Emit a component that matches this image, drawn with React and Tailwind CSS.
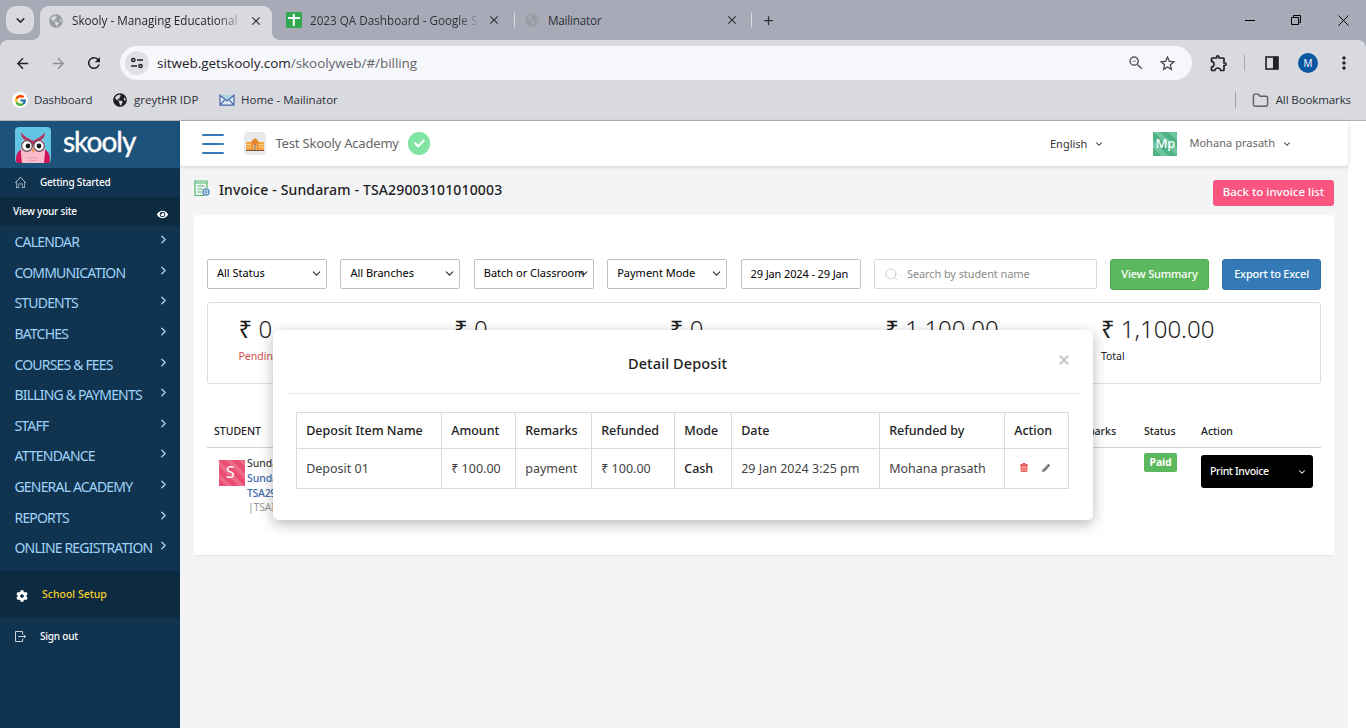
import { FaCheck, FaCog, FaEye, FaGlobeAmericas, FaPencilAlt } from "react-icons/fa";
import { FcGoogle } from "react-icons/fc";
import { FiChevronDown, FiChevronRight, FiSearch, FiX } from "react-icons/fi";
import { LuFolder } from "react-icons/lu";
import {
  MdAdd,
  MdArrowBack,
  MdArrowForward,
  MdClose,
  MdMoreVert,
  MdOutlineExtension,
  MdRefresh,
  MdStarBorder,
  MdZoomOut,
} from "react-icons/md";
import { SlHome } from "react-icons/sl";

const menu = [
  "CALENDAR",
  "COMMUNICATION",
  "STUDENTS",
  "BATCHES",
  "COURSES & FEES",
  "BILLING & PAYMENTS",
  "STAFF",
  "ATTENDANCE",
  "GENERAL ACADEMY",
  "REPORTS",
  "ONLINE REGISTRATION",
];

const stats = [
  { amount: "0", label: "Pending", color: "text-[#d0504c]" },
  { amount: "0" },
  { amount: "0" },
  { amount: "1,100.00" },
  { amount: "1,100.00", label: "Total", color: "text-[#222]" },
];

const depositColumns = [
  { title: "Deposit Item Name", value: "Deposit 01", width: "w-[145px]" },
  { title: "Amount", value: "₹ 100.00", width: "w-[74px]" },
  { title: "Remarks", value: "payment", width: "w-[76px]" },
  { title: "Refunded", value: "₹ 100.00", width: "w-[83px]" },
  { title: "Mode", value: "Cash", width: "w-[57px]", strong: true },
  { title: "Date", value: "29 Jan 2024 3:25 pm", width: "w-[148px]" },
  { title: "Refunded by", value: "Mohana prasath", width: "w-[125px]" },
];

const TabStrip = () => (
  <div className="flex h-10 bg-[#a8abb7] text-[11.7px] text-[#2d3038]">
    <div className="flex w-10 items-center pl-1.5">
      <div className="flex h-7 w-7 items-center justify-center rounded-[10px] bg-[#d9dadf]">
        <FiChevronDown size={13} strokeWidth={3} />
      </div>
    </div>
    <div className="relative mt-1.5 flex h-[34px] w-[232px] items-center rounded-t-[9px] bg-[#d9dadf] pb-[5px] pl-2">
      <span className="absolute bottom-0 -left-2 h-2 w-2 bg-[radial-gradient(circle_at_0_0,#a8abb7_7.5px,#d9dadf_8.5px)]" />
      <span className="absolute -right-2 bottom-0 h-2 w-2 bg-[radial-gradient(circle_at_100%_0,#a8abb7_7.5px,#d9dadf_8.5px)]" />
      <FaGlobeAmericas size={14} className="mr-[9px] ml-[1px] text-[#999ca3]" />
      <span className="w-[168px] bg-linear-to-r from-[#202228] from-85% to-[#b9bbc1] bg-clip-text whitespace-nowrap text-transparent">
        Skooly - Managing Educational
      </span>
      <MdClose size={14} className="ml-[9px]" />
    </div>
    <div className="flex w-[242px] items-center pl-[14px]">
      <svg width="16" height="16" viewBox="0 0 16 16" className="mr-2">
        <rect width="16" height="16" rx="1.5" fill="#2fa84f" />
        <path d="M7.8 2v12M2 6h12" stroke="#fff" strokeWidth="2" />
      </svg>
      <span className="w-[168px] bg-linear-to-r from-[#2d3038] from-88% to-[#a0a3af] bg-clip-text pt-[1px] whitespace-nowrap text-transparent">
        2023 QA Dashboard - Google S
      </span>
      <MdClose size={14} className="ml-[9px]" />
    </div>
    <div className="flex w-[237px] items-center">
      <div className="h-4 w-[1px] bg-[#d9dadf]" />
      <FaGlobeAmericas size={14} className="mr-[9px] ml-[10px] text-[#999ca5]" />
      <span className="w-[168px] pt-[1px] tracking-[-0.2px]">Mailinator</span>
      <MdClose size={14} className="ml-[9px]" />
    </div>
    <div className="flex items-center">
      <div className="mr-[9px] h-4 w-[1px] bg-[#d9dadf]" />
      <MdAdd size={15} />
    </div>
    <div className="ml-auto flex items-center text-black">
      <svg width="11" height="11" viewBox="0 0 11 11" className="mr-[35px]">
        <path d="M0 5.5h10" stroke="currentColor" />
      </svg>
      <svg width="11" height="11" viewBox="0 0 11 11" className="mr-[36px]" fill="none" stroke="currentColor">
        <path d="M.5 2.5h7v7h-7zM2.5 2.5v-2h7v7h-2" />
      </svg>
      <svg width="11" height="11" viewBox="0 0 11 11" className="mr-[17px]" stroke="currentColor">
        <path d="M.5.5l10 10M10.5 .5l-10 10" />
      </svg>
    </div>
  </div>
);

const Toolbar = () => (
  <div className="bg-[#a8abb7]">
    <div className="flex h-[46px] items-center rounded-t-[8px] bg-[#d9dadf] text-[#1f2126]">
      <MdArrowBack size={17} className="ml-[14px]" />
      <MdArrowForward size={17} className="ml-[19px] text-[#8d9098]" />
      <MdRefresh size={18} className="ml-[18px]" />
      <div className="ml-[17px] flex h-[34px] w-[1072px] items-center rounded-full bg-[#f6f7fa] pl-[5px]">
        <div className="flex h-6 w-6 items-center justify-center rounded-full bg-[#dfe0e5]">
          <svg width="14" height="12" viewBox="0 0 14 12" fill="none" stroke="currentColor" strokeWidth="1.5">
            <circle cx="3.3" cy="3" r="1.6" />
            <path d="M7 3h6M1 9h6" />
            <circle cx="10.5" cy="9" r="1.6" />
          </svg>
        </div>
        <span className="ml-2 text-[13.5px] tracking-[-0.05px]">
          sitweb.getskooly.com<span className="text-[#63666d]">/skoolyweb/#/billing</span>
        </span>
        <MdZoomOut size={18} className="mr-[13px] ml-auto text-[#5b5e64]" />
        <MdStarBorder size={19} className="mr-[15px] text-[#45484e]" />
      </div>
      <MdOutlineExtension size={20} className="ml-[17px]" />
      <div className="ml-[15px] h-4 w-[1px] bg-[#a5a8b0]" />
      <svg width="14" height="14" viewBox="0 0 14 14" className="ml-[20px]">
        <rect x="1" y="1" width="12" height="12" fill="none" stroke="currentColor" strokeWidth="1.6" />
        <path d="M8 1h5v12H8z" fill="currentColor" />
      </svg>
      <div className="ml-[19px] flex h-5 w-5 items-center justify-center rounded-full bg-[#0b57a0] text-[10px] text-white">
        M
      </div>
      <MdMoreVert size={20} className="ml-[16px]" />
    </div>
    <div className="flex h-[34px] items-center bg-[#d9dadf] pb-[6px] text-[11.5px] text-[#2d3038]">
      <div className="ml-3 flex h-4 w-4 items-center justify-center rounded-full bg-white">
        <FcGoogle size={13} />
      </div>
      <span className="ml-[6px] w-[73px] tracking-[-0.1px]">Dashboard</span>
      <FaGlobeAmericas size={14} className="ml-[6px] text-[#1c1d21]" />
      <span className="ml-[7px] w-[80px]">greytHR IDP</span>
      <svg width="16" height="12" viewBox="0 0 16 12" className="ml-[5px]">
        <path d="M1 1h14v10H1z" fill="#a9dbe0" />
        <path
          d="M1 1.2l7 5.800 7-5.800v10H1zM1 11.2l4.500-5M15 11.2l-4.500-5"
          fill="#dce9f4"
          stroke="#4a66a8"
          strokeWidth="1.2"
        />
      </svg>
      <span className="ml-[6px]">Home - Mailinator</span>
      <div className="mr-[16px] ml-auto h-4 w-[1px] bg-[#a0a3ab]" />
      <LuFolder size={17} className="text-[#5e6168]" />
      <span className="mr-[15px] ml-[7px] tracking-[-0.1px]">All Bookmarks</span>
    </div>
  </div>
);

const Owl = () => (
  <svg width="36" height="36" viewBox="0 0 36 36" className="rounded-[4px]">
    <rect width="36" height="36" fill="#62c5e3" />
    <path d="M7 22C2 24 0 30 1.500 36H10zM29 22c5 2 7 8 5.500 14H26z" fill="#cf1259" />
    <path d="M7 36c-1-8-2-17 1-23l4 1h12l4-1c3 6 2 15 1 23z" fill="#f9bccb" />
    <path d="M6.500 5c2 5 7 6 11.500 9 4.500-3 9.500-4 11.500-9 1 6-3 8-7 9.500L18 19l-4.500-4.500C9.500 13 5.500 11 6.500 5z" fill="#b8305c" />
    <circle cx="12" cy="19" r="5.3" fill="#fff" stroke="#6b4a55" strokeWidth="1.2" />
    <circle cx="24" cy="19" r="5.3" fill="#fff" stroke="#6b4a55" strokeWidth="1.2" />
    <circle cx="13" cy="19" r="2.4" fill="#1d1d1d" />
    <circle cx="24" cy="19" r="2.4" fill="#1d1d1d" />
    <path d="M16.3 22l1.700 4.500 1.700-4.500z" fill="#f39a3d" />
    <path d="M13 31h10M14 33.5h8" stroke="#f08fb0" strokeDasharray="2 1" />
  </svg>
);

const Sidebar = () => (
  <div className="w-[180px] shrink-0 bg-[#10344f] text-white">
    <div className="flex h-[47px] items-center bg-[#1d527b] pl-[15px]">
      <Owl />
      <span className="ml-[12px] pb-[8px] font-[Lato] text-[28px] leading-none tracking-[-1px] [-webkit-text-stroke:0.4px_white]">
        skooly
      </span>
    </div>
    <div className="flex h-[29px] items-center pl-[15px] text-[10px] font-medium tracking-[-0.2px]">
      <SlHome size={11} className="text-[#c4ced8]" />
      <span className="ml-[14px]">Getting Started</span>
    </div>
    <div className="flex h-[29px] items-center justify-between bg-[#0d2b40] pr-[12px] pl-[13px] text-[10px] font-medium tracking-[-0.2px]">
      <span>View your site</span>
      <FaEye size={11} className="mt-[5px]" />
    </div>
    <div className="h-[345px] text-[#a0d3f9]">
      {menu.map((item) => (
        <div key={item} className="flex h-[30.6px] items-center justify-between pr-[10px] pl-[14.5px]">
          <span className="pt-[2px] text-[14px] leading-none tracking-[-0.82px] whitespace-nowrap">{item}</span>
          <FiChevronRight size={13} strokeWidth={2.5} className="mb-[3px] shrink-0" />
        </div>
      ))}
    </div>
    <div className="flex h-[47px] items-center bg-[#0d2b40] pl-[16px] text-[10.5px] font-medium">
      <FaCog size={12} className="mt-[2px]" />
      <span className="ml-[14px] text-[#f5d02c]">School Setup</span>
    </div>
    <div className="flex h-[36px] items-center pl-[15px] text-[10px] font-medium tracking-[-0.2px]">
      <svg width="11" height="11" viewBox="0 0 11 11" fill="none" stroke="#c9d3dc">
        <path d="M7.5 3V.5h-7v10h7V8M3 5.5h7.5M8.5 3.5l2 2-2 2" />
      </svg>
      <span className="ml-[14px]">Sign out</span>
    </div>
  </div>
);

const Header = () => (
  <div className="relative flex h-[45px] w-[1168px] items-center rounded-b-[3px] bg-white shadow-[0_1px_4px_rgba(0,0,0,0.16)]">
    <div className="ml-[22px] flex flex-col gap-[7px]">
      <div className="h-[2px] w-[22px] rounded-full bg-[#337ab7]" />
      <div className="h-[2px] w-[22px] rounded-full bg-[#337ab7]" />
      <div className="h-[2px] w-[22px] rounded-full bg-[#337ab7]" />
    </div>
    <div className="ml-[20px] flex h-[23px] w-[22px] items-center justify-center rounded-[4px] bg-[#e8e9ec]">
      <svg width="18" height="14" viewBox="0 0 18 14">
        <path d="M0 5h18v8H0z" fill="#f6a440" />
        <path d="M0 7.5h18M0 10h18" stroke="#fbd08c" />
        <path d="M5.5 13V4L9 1l3.500 3v9z" fill="#e8892b" />
        <path d="M7.5 13V7.500h3V13z" fill="#fbe3c0" />
        <path d="M9 7v6M0 13.5h18" stroke="#7c5232" />
      </svg>
    </div>
    <span className="ml-[9.5px] w-[123.5px] text-[13px] tracking-[-0.2px] whitespace-nowrap text-[#666]">
      Test Skooly Academy
    </span>
    <div className="ml-[9px] flex h-[23px] w-[22px] items-center justify-center rounded-full bg-[#80e5a2] text-white">
      <FaCheck size={11} />
    </div>
    <span className="ml-auto pt-[2px] text-[11px] text-[#333]">English</span>
    <FiChevronDown size={10} strokeWidth={2.5} className="ml-[7px] text-[#333]" />
    <div className="ml-[49px] flex h-6 w-6 items-center justify-center bg-[repeating-linear-gradient(45deg,#4fb287_0_6px,#6fc59f_6px_11px)] text-[13px] font-medium text-white">
      Mp
    </div>
    <span className="ml-[12px] text-[11px] tracking-[0.05px] text-[#666]">Mohana prasath</span>
    <FiChevronDown size={10} strokeWidth={2.5} className="mr-[56px] ml-[7px] text-[#333]" />
  </div>
);

const Select = ({ children }) => (
  <div className="flex h-[30px] w-[120px] items-center justify-between rounded-[2px] border border-[#bfc0c3] pr-[3px] pb-[2px] pl-[9px] text-[11px] text-black">
    <span className="whitespace-nowrap">{children}</span>
    <FiChevronDown size={13} strokeWidth={2.2} className="-ml-3 shrink-0 text-[#333]" />
  </div>
);

const Filters = () => (
  <div className="flex gap-[13.4px]">
    <Select>All Status</Select>
    <Select>All Branches</Select>
    <Select>Batch or Classroom</Select>
    <Select>Payment Mode</Select>
    <div className="flex h-[30px] w-[120px] items-center rounded-[2px] border border-[#bfc0c3] pl-[9px] text-[11px] tracking-[-0.12px] whitespace-nowrap text-black">
      29 Jan 2024 - 29 Jan
    </div>
    <div className="flex h-[30px] w-[222.8px] items-center rounded-[2px] border border-[#d9dadd] pl-[9px] text-[11px] tracking-[-0.1px] text-[#8b8b8b]">
      <FiSearch size={15} strokeWidth={1} className="mr-[8px] text-[#b5b5b5]" />
      Search by student name
    </div>
    <button className="h-[31px] w-[98.7px] rounded-[3px] border border-[#4cae4c] bg-[#5cb85c] text-[11px] font-medium tracking-[-0.15px] text-white">
      View Summary
    </button>
    <button className="h-[31px] w-[98.7px] rounded-[3px] border border-[#2e6da4] bg-[#337ab7] text-[11px] font-medium tracking-[-0.2px] text-white">
      Export to Excel
    </button>
  </div>
);

const Stats = () => (
  <div className="mt-[12px] flex h-[82px] rounded-[3px] border border-[#dcdddf] pl-[30.5px]">
    {stats.map((stat, index) => (
      <div key={index} className="w-[215.6px] pt-[11px]">
        <div className="text-[24px] leading-[30px] font-light text-[#1c1c1c]">
          <span className="font-normal">₹</span> {stat.amount}
        </div>
        {stat.label && <div className={`mt-[4px] text-[10.5px] leading-4 ${stat.color}`}>{stat.label}</div>}
      </div>
    ))}
  </div>
);

const InvoiceTable = () => (
  <div className="text-[10.5px] text-[#222]">
    <div className="mt-[31px] flex h-[33px] items-center border-b border-[#cdd0d2] pt-[2px] font-medium">
      <span className="w-[865px] pl-[7px]">STUDENT</span>
      <span className="w-[72px]">Remarks</span>
      <span className="w-[57px]">Status</span>
      <span>Action</span>
    </div>
    <div className="flex">
      <div className="mt-[12px] ml-[12px] flex h-[26px] w-[26px] justify-center bg-[repeating-linear-gradient(45deg,#e94d72_0_5px,#ef6a86_5px_9px)] pr-[3px] text-[16px] leading-[24px] text-white">
        S
      </div>
      <div className="mt-[8px] ml-[2px] w-[897px] leading-[15px]">
        <div>Sundaram</div>
        <div className="font-medium tracking-[-0.1px] text-[#3f69ae]">Sundaram -</div>
        <div className="font-medium tracking-[-0.3px] text-[#3f69ae]">TSA29003101010003</div>
        <div className="pl-[1px] leading-[13px] tracking-[-0.2px] text-[#999]">|TSAINV003</div>
      </div>
      <div className="mt-[5px] h-[19px] w-[33px] rounded-[2px] bg-[#5cb85c] text-center text-[10.5px] leading-[19px] font-bold tracking-[-0.2px] text-white">
        Paid
      </div>
      <div className="mt-[7px] ml-[24px] flex h-[33px] w-[112px] items-center justify-between rounded-[3px] bg-black pr-[6px] pl-[9px] text-[10.5px] font-medium tracking-[-0.35px] text-white">
        Print Invoice
        <FiChevronDown size={10} strokeWidth={2.5} />
      </div>
    </div>
  </div>
);

const DepositModal = () => (
  <div className="absolute top-[209px] left-[93px] h-[190px] w-[820px] rounded-[5px] bg-white px-[14px] text-[#222] shadow-[0_4px_14px_rgba(0,0,0,0.28)]">
    <div className="flex h-[64px] items-center border-b border-[#e8e8e8] pt-[5px]">
      <h2 className="ml-[341px] text-[14.5px] font-medium tracking-[0.1px]">Detail Deposit</h2>
      <button className="mt-[-8px] mr-[8px] ml-auto text-[#c4c4c4]">
        <FiX size={14} strokeWidth={3.5} />
      </button>
    </div>
    <div className="mt-[18px] ml-[9px] flex w-fit border-t border-l border-[#dadada] text-[12.5px]">
      {depositColumns.map((column) => (
        <div key={column.title} className={`${column.width} border-r border-[#dadada] whitespace-nowrap`}>
          <div className="h-[36px] border-b border-[#dadada] pl-[9.2px] leading-[36px] font-medium">
            {column.title}
          </div>
          <div className="h-[40px] border-b border-[#dadada] pl-[9.2px] leading-[39px]">
            <span className={column.strong ? "font-medium" : "text-[#444]"}>{column.value}</span>
          </div>
        </div>
      ))}
      <div className="w-[64px] border-r border-[#dadada]">
        <div className="h-[36px] border-b border-[#dadada] pl-[9.2px] leading-[36px] font-medium">Action</div>
        <div className="flex h-[40px] items-center border-b border-[#dadada] pl-[15px]">
          <svg width="8" height="9" viewBox="0 0 8 9" className="mb-[2px]" fill="#f7a09e" stroke="#e8403c">
            <path d="M1.2 2.300h5.600v6H1.200zM0 1.800h8M2.800.5h2.400M4 4v3" />
          </svg>
          <FaPencilAlt size={8} className="mb-[2px] ml-[14px] text-[#666]" />
        </div>
      </div>
    </div>
  </div>
);

const InvoiceIcon = () => (
  <svg width="16" height="17" viewBox="0 0 16 17" fill="none" stroke="#4fb96a" strokeWidth="1.2">
    <path d="M10 15.5H1V1h12v7M1 3h12M3.5 6h7M3.5 9h5M3.5 12h4" />
    <circle cx="12" cy="12" r="3" stroke="#5f93c4" strokeWidth="1.5" />
    <circle cx="12" cy="12" r=".8" stroke="#5f93c4" />
  </svg>
);

const App = () => (
  <div className="h-[728px] w-[1366px] overflow-hidden bg-white font-['Noto_Sans',sans-serif]">
    <div className="h-[121px] border-b border-[#aeb0b5] font-['Open_Sans',sans-serif]">
      <TabStrip />
      <Toolbar />
    </div>
    <div className="flex h-[607px]">
      <Sidebar />
      <div className="relative w-[1168px] bg-[#f3f4f6]">
        <Header />
        <div className="flex h-[49px] pr-[14px] pl-[14px]">
          <div className="mt-[14px]">
            <InvoiceIcon />
          </div>
          <h1 className="mt-[13px] ml-[9px] text-[14px] leading-[22px] font-medium tracking-[0.15px] text-[#222]">
            Invoice - Sundaram - TSA29003101010003
          </h1>
          <button className="mt-[14px] ml-auto h-[26px] w-[121px] rounded-[3px] bg-[#fa5580] pb-[2px] text-[11.5px] font-medium text-white">
            Back to invoice list
          </button>
        </div>
        <div className="mx-[14px] h-[341px] rounded-[3px] border-b border-[#e4e5e7] bg-white px-[13px] pt-[44px]">
          <Filters />
          <Stats />
          <InvoiceTable />
        </div>
        <DepositModal />
      </div>
    </div>
  </div>
);

export default App;
